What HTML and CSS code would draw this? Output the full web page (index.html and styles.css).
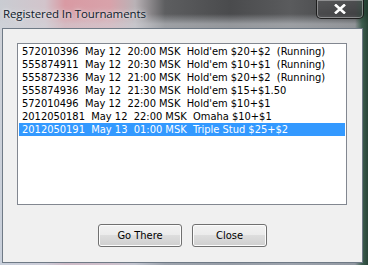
FILE: index.html
```html
<!DOCTYPE html>
<html lang="en">
<head>
  <meta charset="UTF-8">
  <title>Registered In Tournaments</title>
  <link rel="stylesheet" href="styles.css">
</head>
<body>
<div class="window">
  <div class="titlebar">
    <span class="title">Registered In Tournaments</span>
    <button class="close-x" aria-label="Close">
      <svg width="14" height="10" viewBox="0 0 14 10">
        <path d="M2 0.5 L12 9.5 M12 0.5 L2 9.5" stroke="#fff" stroke-width="2.6" fill="none"/>
      </svg>
    </button>
  </div>

  <div class="client">
    <ul class="listbox">
      <li>572010396  May 12  20:00 MSK  Hold'em $20+$2  (Running)</li>
      <li>555874911  May 12  20:30 MSK  Hold'em $10+$1  (Running)</li>
      <li>555872336  May 12  21:00 MSK  Hold'em $20+$2  (Running)</li>
      <li>555874936  May 12  21:30 MSK  Hold'em $15+$1.50</li>
      <li>572010496  May 12  22:00 MSK  Hold'em $10+$1</li>
      <li>2012050181  May 12  22:00 MSK  Omaha $10+$1</li>
      <li class="selected">2012050191  May 13  01:00 MSK  Triple Stud $25+$2</li>
    </ul>

    <div class="actions">
      <button class="btn btn-wide">Go There</button>
      <button class="btn">Close</button>
    </div>
  </div>
</div>
</body>
</html>
```

FILE: styles.css
```css
body {
  margin: 0;
  font-family: "DejaVu Sans Condensed", "DejaVu Sans", sans-serif;
  font-size: 11px;
}
.window {
  width: 368px;
  height: 265px;
  box-sizing: border-box;
  padding: 0 5px 2px 2px;
  display: flex;
  flex-direction: column;
  background:
    linear-gradient(90deg, rgba(0,0,0,0) 0, rgba(0,0,0,0) 355px, rgba(40,80,60,0.8) 362px, rgba(30,60,45,0.9) 368px),
    linear-gradient(180deg, rgba(0,0,0,0) 0, rgba(0,0,0,0) 14px, rgba(210,214,220,0.55) 24px, rgba(200,210,225,0.6) 100%),
    linear-gradient(90deg, #c9ccd2 0, #d2c4cb 45px, #d99aa3 65px, #d8a2aa 110px, #b9b2b6 135px, #5d5e60 165px, #4a4b4d 230px, #5a5b5d 290px, #48494b 340px, #3a3c3d 368px);
}
.titlebar {
  height: 28px;
  display: flex;
  align-items: flex-start;
  justify-content: space-between;
  position: relative;
}
.title {
  margin: 6px 0 0 1px;
  font-family: "Open Sans", "Noto Sans", sans-serif;
  font-size: 11.5px;
  color: #0e1a2a;
  text-shadow: 0 0 6px rgba(235,238,242,0.95), 0 0 3px rgba(235,238,242,0.9);
  letter-spacing: -0.1px;
}
.close-x {
  width: 48px;
  height: 19px;
  margin-right: -1px;
  padding: 0;
  border: 1px solid rgba(20,20,20,0.85);
  border-top: none;
  border-radius: 0 0 5px 5px;
  background: linear-gradient(180deg, rgba(90,90,92,0.55), rgba(60,60,62,0.5));
  box-shadow: inset 0 0 0 1px rgba(255,255,255,0.35);
  display: flex;
  align-items: center;
  justify-content: center;
}
.client {
  flex: 1;
  border: 1px solid #6f7a86;
  background: #f0f0f0;
  display: flex;
  flex-direction: column;
  align-items: center;
}
.listbox {
  list-style: none;
  margin: 14px 0 0 -1px;
  padding: 1px;
  width: 330px;
  height: 162px;
  box-sizing: border-box;
  border: 1px solid #828790;
  background: #fff;
}
.listbox li {
  height: 13px;
  line-height: 13px;
  padding-left: 3px;
  white-space: pre;
  color: #000;
}
.listbox li.selected {
  background: #3399ff;
  color: #fff;
}
.actions {
  margin-top: 19px;
  display: flex;
  gap: 10px;
}
.btn {
  width: 75px;
  height: 23px;
  padding: 0;
  font-family: "DejaVu Sans Condensed", "DejaVu Sans", sans-serif;
  font-size: 11px;
  color: #000;
  border: 1px solid #707070;
  border-radius: 3px;
  background: linear-gradient(180deg, #f2f2f2 0, #ebebeb 50%, #dddddd 50%, #cfcfcf 100%);
  box-shadow: inset 0 0 0 1px #fcfcfc;
}
.btn-wide {
  width: 84px;
}
```
